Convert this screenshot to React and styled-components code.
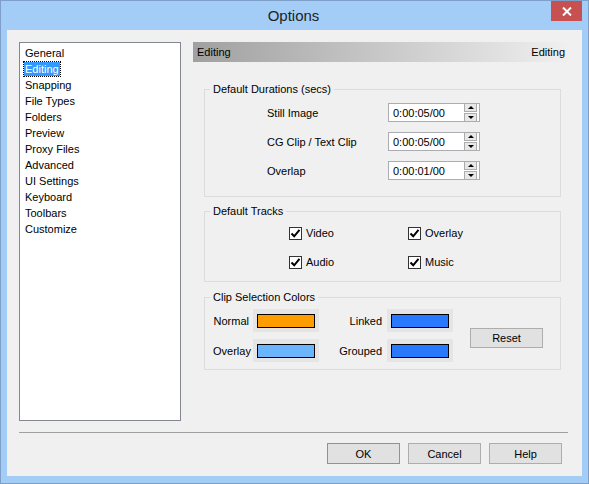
import React from 'react';
import styled, { createGlobalStyle } from 'styled-components';

const GlobalStyle = createGlobalStyle`
  body {
    margin: 0;
    font-family: "Liberation Sans", Arial, sans-serif;
    font-size: 11px;
    color: #000;
  }
`;

const pages = [
  'General',
  'Editing',
  'Snapping',
  'File Types',
  'Folders',
  'Preview',
  'Proxy Files',
  'Advanced',
  'UI Settings',
  'Keyboard',
  'Toolbars',
  'Customize',
];

const durations = [
  { label: 'Still Image', value: '0:00:05/00' },
  { label: 'CG Clip / Text Clip', value: '0:00:05/00' },
  { label: 'Overlap', value: '0:00:01/00' },
];

const tracks = ['Video', 'Overlay', 'Audio', 'Music'];

const swatches = [
  { label: 'Normal', color: '#ff9c00' },
  { label: 'Linked', color: '#2979ff' },
  { label: 'Overlay', color: '#6bb5ff' },
  { label: 'Grouped', color: '#2979ff' },
];

const App = () => {
  return (
    <>
      <GlobalStyle />
      <Window>
        <TitleBar>
          <span />
          <Title>Options</Title>
          <CloseButton>
            <svg width="10" height="9" viewBox="0 0 10 9">
              <path d="M1 0.5 L9 8.5 M9 0.5 L1 8.5" stroke="#fff" strokeWidth="2" />
            </svg>
          </CloseButton>
        </TitleBar>
        <Client>
          <Main>
            <PageList>
              {pages.map((p) => (
                <PageItem key={p}>
                  <PageText $selected={p === 'Editing'}>{p}</PageText>
                </PageItem>
              ))}
            </PageList>
            <Pane>
              <PaneHeader>
                <span>Editing</span>
                <span>Editing</span>
              </PaneHeader>

              <Group $top={20}>
                <Legend>Default Durations (secs)</Legend>
                <DurationGrid>
                  {durations.map((d) => (
                    <React.Fragment key={d.label}>
                      <FieldLabel>{d.label}</FieldLabel>
                      <SpinBox>
                        <SpinValue>{d.value}</SpinValue>
                        <SpinButtons>
                          <SpinButton>
                            <Arrow $up />
                          </SpinButton>
                          <SpinButton>
                            <Arrow />
                          </SpinButton>
                        </SpinButtons>
                      </SpinBox>
                    </React.Fragment>
                  ))}
                </DurationGrid>
              </Group>

              <Group $top={7}>
                <Legend>Default Tracks</Legend>
                <TrackGrid>
                  {tracks.map((t) => (
                    <CheckItem key={t}>
                      <CheckBox>
                        <svg width="11" height="11" viewBox="0 0 11 11">
                          <path
                            d="M1.5 5.5 L4.2 8.3 L9.5 1.8"
                            fill="none"
                            stroke="#000"
                            strokeWidth="2"
                          />
                        </svg>
                      </CheckBox>
                      {t}
                    </CheckItem>
                  ))}
                </TrackGrid>
              </Group>

              <Group $top={8}>
                <Legend>Clip Selection Colors</Legend>
                <ColorGrid>
                  {swatches.map((s, i) => (
                    <React.Fragment key={s.label}>
                      <ColorLabel $pad={i % 2 === 0 ? 4 : 5}>{s.label}</ColorLabel>
                      <SwatchButton>
                        <Swatch style={{ background: s.color }} />
                      </SwatchButton>
                      {i === 1 && <ResetButton>Reset</ResetButton>}
                    </React.Fragment>
                  ))}
                </ColorGrid>
              </Group>
            </Pane>
          </Main>
          <Separator />
          <Footer>
            <DialogButton $default>OK</DialogButton>
            <DialogButton>Cancel</DialogButton>
            <DialogButton>Help</DialogButton>
          </Footer>
        </Client>
      </Window>
    </>
  );
};

export default App;

const Window = styled.div`
  width: 589px;
  height: 484px;
  box-sizing: border-box;
  background: #a3cdf7;
  border: 1px solid #7d9fc8;
  display: flex;
  flex-direction: column;
`;

const TitleBar = styled.div`
  height: 29px;
  display: grid;
  grid-template-columns: 1fr auto 1fr;
  padding-right: 6px;
`;

const Title = styled.div`
  font-size: 15px;
  color: #222;
  line-height: 29px;
  padding-left: 4px;
`;

const CloseButton = styled.div`
  justify-self: end;
  width: 31px;
  height: 20px;
  background: #c75050;
  display: flex;
  align-items: center;
  justify-content: center;
`;

const Client = styled.div`
  flex: 1;
  margin: 0 6px 7px 6px;
  background: #f0f0f0;
  padding: 12px 12px 12px 12px;
  display: flex;
  flex-direction: column;
`;

const Main = styled.div`
  display: flex;
  gap: 12px;
  height: 379px;
`;

const PageList = styled.div`
  width: 162px;
  box-sizing: border-box;
  background: #fff;
  border: 1px solid #828790;
  padding-top: 1px;
`;

const PageItem = styled.div`
  height: 16px;
  line-height: 16px;
  padding-left: 5px;
`;

const PageText = styled.span`
  display: inline-block;
  height: 14px;
  line-height: 14px;
  padding: 0 1px;
  margin-left: -1px;
  vertical-align: middle;
  background: ${(p) => (p.$selected ? '#3399ff' : 'transparent')};
  color: ${(p) => (p.$selected ? '#fff' : '#000')};
  outline: ${(p) => (p.$selected ? '1px dotted #000' : 'none')};
`;

const Pane = styled.div`
  width: 377px;
  display: flex;
  flex-direction: column;
`;

const PaneHeader = styled.div`
  height: 20px;
  display: flex;
  align-items: center;
  justify-content: space-between;
  padding: 0 5px 0 4px;
  background: linear-gradient(to right, #a0a0a0, #f0f0f0);
`;

const Group = styled.fieldset`
  margin: ${(p) => p.$top}px 0 0 11px;
  width: 357px;
  box-sizing: border-box;
  border: 1px solid #dcdcdc;
  padding: 0;
  min-width: 0;
`;

const Legend = styled.legend`
  margin-left: 5px;
  padding: 0 3px;
  line-height: 14px;
  height: 14px;
`;

const DurationGrid = styled.div`
  display: grid;
  grid-template-columns: 121px 92px;
  grid-auto-rows: 19px;
  row-gap: 10px;
  align-items: center;
  padding: 7px 0 16px 62px;
`;

const FieldLabel = styled.div``;

const SpinBox = styled.div`
  height: 19px;
  box-sizing: border-box;
  border: 1px solid #abadb3;
  background: #fff;
  display: flex;
  align-items: center;
  padding: 0 2px 0 4px;
`;

const SpinValue = styled.span`
  flex: 1;
`;

const SpinButtons = styled.div`
  display: flex;
  flex-direction: column;
  gap: 1px;
`;

const SpinButton = styled.div`
  width: 11px;
  height: 7px;
  border: 1px solid #acacac;
  background: #e8e8e8;
  display: flex;
  align-items: center;
  justify-content: center;
`;

const Arrow = styled.div`
  width: 0;
  height: 0;
  border-left: 3px solid transparent;
  border-right: 3px solid transparent;
  ${(p) =>
    p.$up ? 'border-bottom: 3px solid #000;' : 'border-top: 3px solid #000;'}
`;

const TrackGrid = styled.div`
  display: grid;
  grid-template-columns: 119px auto;
  grid-auto-rows: 16px;
  row-gap: 13px;
  padding: 7px 0 11px 84px;
`;

const CheckItem = styled.div`
  display: flex;
  align-items: center;
  gap: 4px;
`;

const CheckBox = styled.div`
  width: 13px;
  height: 13px;
  box-sizing: border-box;
  border: 1px solid #333;
  background: #fff;
  display: flex;
  align-items: center;
  justify-content: center;
`;

const ColorGrid = styled.div`
  display: grid;
  grid-template-columns: 40px 66px 68px 66px 90px;
  grid-auto-rows: 23px;
  row-gap: 7px;
  align-items: center;
  padding: 5px 0 7px 8px;
`;

const ColorLabel = styled.div`
  text-align: right;
  padding-right: ${(p) => p.$pad}px;
`;

const SwatchButton = styled.div`
  height: 23px;
  background: #e5e5e5;
  display: flex;
  align-items: center;
  justify-content: center;
`;

const Swatch = styled.div`
  width: 58px;
  height: 14px;
  box-sizing: border-box;
  border: 1px solid #000;
`;

const ResetButton = styled.div`
  grid-column: 5;
  grid-row: 1 / span 2;
  justify-self: end;
  margin-top: 5px;
  width: 73px;
  height: 20px;
  box-sizing: border-box;
  border: 1px solid #adadad;
  background: #e1e1e1;
  display: flex;
  align-items: center;
  justify-content: center;
`;

const Separator = styled.div`
  height: 1px;
  background: #a0a0a0;
  margin: 11px 2px 0 0;
`;

const Footer = styled.div`
  display: flex;
  justify-content: flex-end;
  gap: 8px;
  margin-top: 10px;
  padding-right: 8px;
`;

const DialogButton = styled.div`
  width: 73px;
  height: 21px;
  box-sizing: border-box;
  border: 1px solid ${(p) => (p.$default ? '#5a9fe6' : '#adadad')};
  background: #e1e1e1;
  display: flex;
  align-items: center;
  justify-content: center;
`;
